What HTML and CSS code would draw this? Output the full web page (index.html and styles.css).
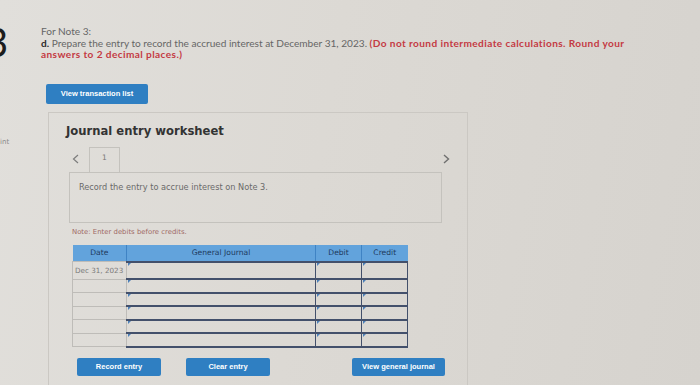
FILE: index.html
```html
<!DOCTYPE html>
<html lang="en">
<head>
  <meta charset="UTF-8">
  <title>Journal entry worksheet</title>
  <link rel="stylesheet" href="styles.css">
</head>
<body>

  <div class="page">
    <aside class="gutter">
      <div class="qnum">3</div>
      <div class="pts">int</div>
    </aside>

    <main class="main">
      <p class="prompt">
        For Note 3:<br>
        <b>d.</b> Prepare the entry to record the accrued interest at December 31, 2023.
        <span class="warn">(Do not round intermediate calculations. Round your<br>answers to 2 decimal places.)</span>
      </p>

      <button class="btn btn-list">View transaction list</button>

      <section class="panel">
        <h2 class="panel-title">Journal entry worksheet</h2>

        <div class="tabs">
          <span class="arrow">
            <svg width="7" height="10" viewBox="0 0 7 10"><polyline points="6,1 1.5,5 6,9" fill="none" stroke="#7d7d7d" stroke-width="1.2"/></svg>
          </span>
          <span class="tab">1</span>
          <span class="arrow next">
            <svg width="7" height="10" viewBox="0 0 7 10"><polyline points="1,1 5.5,5 1,9" fill="none" stroke="#6f6f6f" stroke-width="1.4"/></svg>
          </span>
        </div>

        <div class="task">Record the entry to accrue interest on Note 3.</div>

        <p class="note">Note: Enter debits before credits.</p>

        <table class="journal">
          <colgroup>
            <col class="c-date">
            <col class="c-acct">
            <col class="c-amt">
            <col class="c-amt">
          </colgroup>
          <thead>
            <tr>
              <th>Date</th>
              <th>General Journal</th>
              <th>Debit</th>
              <th>Credit</th>
            </tr>
          </thead>
          <tbody>
            <tr class="first">
              <td class="date">Dec 31, 2023</td>
              <td class="in"></td>
              <td class="in"></td>
              <td class="in"></td>
            </tr>
            <tr><td class="date"></td><td class="in"></td><td class="in"></td><td class="in"></td></tr>
            <tr><td class="date"></td><td class="in"></td><td class="in"></td><td class="in"></td></tr>
            <tr><td class="date"></td><td class="in"></td><td class="in"></td><td class="in"></td></tr>
            <tr><td class="date"></td><td class="in"></td><td class="in"></td><td class="in"></td></tr>
            <tr><td class="date"></td><td class="in"></td><td class="in"></td><td class="in"></td></tr>
          </tbody>
        </table>

        <div class="actions">
          <button class="btn btn-record">Record entry</button>
          <button class="btn btn-clear">Clear entry</button>
          <button class="btn btn-view">View general journal</button>
        </div>
      </section>
    </main>
  </div>

</body>
</html>
```

FILE: styles.css
```css
body {
  margin: 0;
  height: 385px;
  overflow: hidden;
  background: linear-gradient(100deg, #e1dfdb 0%, #dcd9d4 45%, #d6d3ce 100%);
  font-family: Lato, sans-serif;
  color: #555;
}

.page {
  display: flex;
  height: 385px;
}

.gutter {
  width: 41px;
  flex-shrink: 0;
  overflow: hidden;
}

.qnum {
  margin: 22px 0 0 -15px;
  font-size: 40px;
  line-height: 40px;
  color: #1c1c1c;
}

.pts {
  margin-top: 76px;
  font-family: 'DejaVu Sans', sans-serif;
  font-size: 7px;
  color: #8a8a8a;
}

.main {
  flex: 1;
  padding-top: 26px;
}

.prompt {
  margin: 0;
  font-size: 10.1px;
  line-height: 11.5px;
  color: #666;
}

.prompt b {
  color: #2a2a2a;
}

.warn {
  font-weight: bold;
  letter-spacing: 0.4px;
  color: #c43a43;
}

.btn {
  border: none;
  border-radius: 2px;
  background: #2f7fc2;
  color: #fff;
  font-family: 'Liberation Sans', Arial, sans-serif;
  font-weight: bold;
  font-size: 7.5px;
  padding: 0;
  cursor: pointer;
}

.btn-list {
  display: block;
  margin: 23px 0 0 5px;
  width: 102px;
  height: 20px;
}

.panel {
  margin: 8px 0 0 7px;
  width: 398px;
  height: 300px;
  padding: 11px 0 0 20px;
  border: 1px solid #cbc8c3;
  border-bottom: none;
}

.panel-title {
  margin: 0 0 0 -3px;
  font-family: 'DejaVu Sans', sans-serif;
  font-size: 11.6px;
  line-height: 14px;
  color: #333;
}

.tabs {
  display: flex;
  align-items: center;
  width: 381px;
  height: 25px;
  margin-top: 9px;
}

.arrow {
  display: flex;
  margin: 0 0 0 3px;
}

.arrow.next {
  margin: 0 0 0 auto;
}

.tab {
  width: 31px;
  height: 25px;
  margin-left: 10px;
  border: 1px solid #c4c2bd;
  border-bottom: none;
  box-sizing: border-box;
  text-align: center;
  font-family: 'DejaVu Sans', sans-serif;
  font-size: 7.5px;
  line-height: 20px;
  color: #777;
}

.task {
  width: 373px;
  height: 51px;
  box-sizing: border-box;
  padding: 9px 0 0 9px;
  border: 1px solid #c4c2bd;
  font-family: 'DejaVu Sans', sans-serif;
  font-size: 8.2px;
  color: #6a6a6a;
}

.note {
  margin: 5px 0 0 3px;
  font-family: 'DejaVu Sans', sans-serif;
  font-size: 6.9px;
  line-height: 8px;
  color: #a06a66;
}

.journal {
  margin: 9px 0 0 3px;
  width: 335px;
  border-collapse: collapse;
  table-layout: fixed;
  font-family: 'DejaVu Sans', sans-serif;
}

.c-date { width: 54px; }
.c-acct { width: 189px; }
.c-amt { width: 46px; }

.journal th {
  height: 16px;
  padding: 0;
  background: #62a3dc;
  font-size: 7.6px;
  line-height: 16px;
  font-weight: normal;
  color: #1e3a5c;
  border-left: 1px solid #3f83c4;
}

.journal th:first-child {
  border-left: none;
}

.journal td {
  height: 11.6px;
  padding: 0;
  line-height: 0;
}

.journal tr.first td {
  height: 15.5px;
}

.journal td.date {
  border: 1px solid #bebcb8;
  font-size: 7.2px;
  line-height: 13px;
  color: #7a7a7a;
  padding-left: 2px;
}

.journal td.in {
  position: relative;
  border: 1px solid #43506b;
  border-width: 2px 1px;
}

.journal td.in::before {
  content: '';
  position: absolute;
  left: 1px;
  top: 0;
  border-top: 3px solid #4b7fb8;
  border-right: 3px solid transparent;
}

.actions {
  display: flex;
  margin-top: 10px;
}

.actions .btn {
  height: 18px;
}

.btn-record {
  width: 84px;
  margin-left: 8px;
}

.btn-clear {
  width: 84px;
  margin-left: 25px;
}

.btn-view {
  width: 93px;
  margin-left: 82px;
}
```
